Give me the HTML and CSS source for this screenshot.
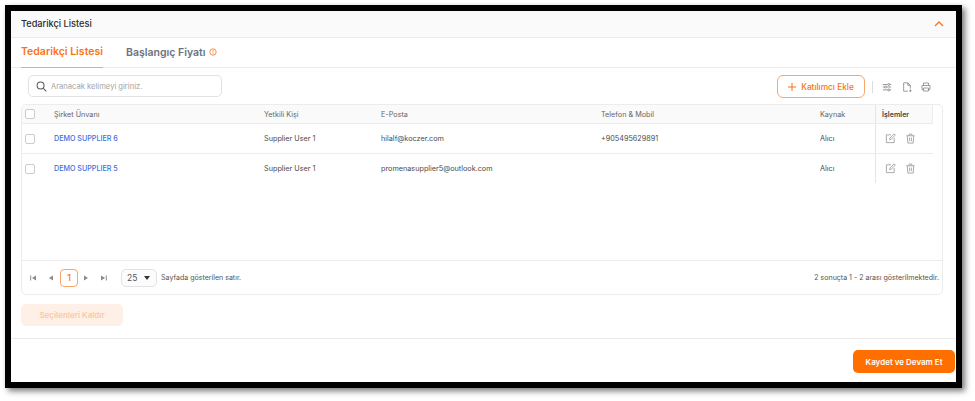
FILE: index.html
```html
<!DOCTYPE html>
<html lang="tr">
<head>
<meta charset="utf-8">
<title>Tedarikçi Listesi</title>
<link rel="stylesheet" href="styles.css">
</head>
<body>
<main class="frame">
  <header class="panel-head">
    <span>Tedarikçi Listesi</span>
    <svg class="chev" viewBox="0 0 10 6" width="10" height="6"><path d="M1 5l4-4 4 4" fill="none" stroke="#f97316" stroke-width="1.300"/></svg>
  </header>
  <nav class="tabs">
    <a class="tab active">Tedarikçi Listesi</a>
    <a class="tab">Başlangıç Fiyatı
      <svg viewBox="0 0 10 10" width="8" height="8"><circle cx="5" cy="5" r="4" fill="none" stroke="#f97316" stroke-width="1"/><path d="M5 2.600v3M5 6.600v1" stroke="#f97316" stroke-width="1"/></svg>
    </a>
  </nav>
  <section class="toolbar">
    <div class="search">
      <svg viewBox="0 0 12 12" width="11" height="11"><circle cx="5" cy="5" r="3.800" fill="none" stroke="#555" stroke-width="1.100"/><path d="M8 8l3.300 3.300" stroke="#555" stroke-width="1.100"/></svg>
      <span>Aranacak kelimeyi giriniz.</span>
    </div>
    <div class="tools">
      <button class="add"><svg viewBox="0 0 8 8" width="8" height="8"><path d="M4 0v8M0 4h8" stroke="#f97316" stroke-width="1"/></svg>Katılımcı Ekle</button>
      <i class="divider"></i>
      <svg viewBox="0 0 12 12" width="10" height="10"><path d="M1 3h6M9.500 3H11M1 6h2M5.500 6H11M1 9.500h6M9.500 9.500H11" stroke="#888" fill="none"/><circle cx="8.200" cy="3" r="1.200" fill="none" stroke="#888"/><circle cx="4.200" cy="6" r="1.200" fill="none" stroke="#888"/><circle cx="8.200" cy="9.500" r="1.200" fill="none" stroke="#888"/></svg>
      <svg viewBox="0 0 12 12" width="10" height="10"><path d="M7 11H2V1h5l3 3v4M7 1v3h3M10 9v3M8.500 10.500h3" stroke="#888" fill="none"/></svg>
      <svg viewBox="0 0 12 12" width="10" height="10"><path d="M3 4V1.200h6V4M3 9H1.200V4.200h9.600V9H9M3 7.200h6v3.600H3z" stroke="#888" fill="none"/></svg>
    </div>
  </section>
  <section class="table-card">
    <div class="row head">
      <div class="c chk"><i class="box"></i></div>
      <div class="c name">Şirket Ünvanı</div>
      <div class="c person">Yetkili Kişi</div>
      <div class="c mail">E-Posta</div>
      <div class="c phone">Telefon &amp; Mobil</div>
      <div class="c src">Kaynak</div>
      <div class="c act">İşlemler</div>
    </div>
    <div class="row body">
      <div class="c chk"><i class="box"></i></div>
      <div class="c name"><a>DEMO SUPPLIER 6</a></div>
      <div class="c person">Supplier User 1</div>
      <div class="c mail">hilalf@koczer.com</div>
      <div class="c phone">+905495629891</div>
      <div class="c src">Alıcı</div>
      <div class="c act">
        <svg viewBox="0 0 12 12" width="11" height="11"><path d="M6.500 2H1.500v8.500H10V5.500M5 7.200l.4-1.800L10 .9l1.300 1.300-4.500 4.600z" fill="none" stroke="#a3a3a3"/></svg>
        <svg viewBox="0 0 12 12" width="11" height="11"><path d="M1.500 3h9M4.500 3V1.200h3V3M2.500 3l.6 8h5.800l.6-8M5 5v4M7 5v4" fill="none" stroke="#a3a3a3"/></svg>
      </div>
    </div>
    <div class="row body last">
      <div class="c chk"><i class="box"></i></div>
      <div class="c name"><a>DEMO SUPPLIER 5</a></div>
      <div class="c person">Supplier User 1</div>
      <div class="c mail">promenasupplier5@outlook.com</div>
      <div class="c phone"></div>
      <div class="c src">Alıcı</div>
      <div class="c act">
        <svg viewBox="0 0 12 12" width="11" height="11"><path d="M6.500 2H1.500v8.500H10V5.500M5 7.200l.4-1.800L10 .9l1.300 1.300-4.500 4.600z" fill="none" stroke="#a3a3a3"/></svg>
        <svg viewBox="0 0 12 12" width="11" height="11"><path d="M1.500 3h9M4.500 3V1.200h3V3M2.500 3l.6 8h5.800l.6-8M5 5v4M7 5v4" fill="none" stroke="#a3a3a3"/></svg>
      </div>
    </div>
    <div class="spacer"></div>
    <footer class="pager">
      <div class="pg-left">
        <svg class="pi" viewBox="0 0 6 6" width="6" height="6"><path d="M6 .5L2 3l4 2.500z" fill="#8a8a8a"/><path d="M.7 .5v5" stroke="#8a8a8a"/></svg>
        <svg class="pi" viewBox="0 0 6 6" width="6" height="6"><path d="M5 .5L1 3l4 2.500z" fill="#8a8a8a"/></svg>
        <span class="cur">1</span>
        <svg class="pi" viewBox="0 0 6 6" width="6" height="6"><path d="M1 .5L5 3 1 5.500z" fill="#8a8a8a"/></svg>
        <svg class="pi" viewBox="0 0 6 6" width="6" height="6"><path d="M0 .5L4 3 0 5.500z" fill="#8a8a8a"/><path d="M5.300 .5v5" stroke="#8a8a8a"/></svg>
        <div class="size"><span>25</span><i class="caret"></i></div>
        <span class="lbl">Sayfada gösterilen satır.</span>
      </div>
      <span class="lbl">2 sonuçta 1 - 2 arası gösterilmektedir.</span>
    </footer>
  </section>
  <div class="bulk"><button class="remove">Seçilenleri Kaldır</button></div>
  <div class="actions"><button class="save">Kaydet ve Devam Et</button></div>
</main>
</body>
</html>
```
FILE: styles.css
```css
* { box-sizing: border-box; }
html, body { margin: 0; background: #fff; }
body { font-family: Inter, "Liberation Sans", sans-serif; color: #333; width: 975px; height: 401px; overflow: hidden; }
.frame { margin: 5px 0 0 5px; width: 957px; height: 383px; border: 6px solid #000; background: #fff; box-shadow: 3px 3px 6px #777; display: flex; flex-direction: column; }
.panel-head { height: 27px; background: #fafafa; border-bottom: 1px solid #ebebeb; display: flex; align-items: center; justify-content: space-between; padding: 0 12px 1px 10px; font-size: 9.200px; font-weight: 500; color: #2b2b2b; }
.tabs { height: 30px; border-bottom: 1px solid #ebebeb; display: flex; gap: 23px; padding-left: 10px; }
.tab { font-size: 10.500px; font-weight: 600; color: #6b7280; display: flex; align-items: center; gap: 4px; padding-bottom: 2px; height: 30px; }
.tab.active { color: #f97316; border-bottom: 1px solid #f9a56b; }
.toolbar { height: 36px; display: flex; align-items: flex-start; justify-content: space-between; padding: 7px 25px 0 17px; }
.search { width: 194px; height: 22px; border: 1px solid #e2e2e2; border-radius: 5px; display: flex; align-items: center; gap: 4px; padding-left: 7px; font-size: 7.600px; color: #a3a3a3; }
.tools { display: flex; align-items: center; gap: 9.500px; }
.add { width: 88px; height: 23px; border: 1px solid #f9a56b; border-radius: 6px; background: #fff; color: #f97316; font: 500 8.300px Inter, sans-serif; display: flex; align-items: center; justify-content: center; gap: 5px; padding: 0; }
.divider { width: 1px; height: 12px; background: #ddd; margin-left: -3px; }
.table-card { margin: 0 13px 0 10px; height: 191px; border: 1px solid #ececec; border-radius: 5px; display: flex; flex-direction: column; font-size: 7.250px; }
.row { display: flex; border-bottom: 1px solid #ececec; margin-right: 9px; }
.row.head { height: 19px; background: #fafafa; color: #666; font-weight: 400; border-top-left-radius: 5px; }
.row.body { height: 30px; color: #4b4b4b; font-weight: 400; }
.row.last { height: 29px; border-bottom: 0; }
.c { display: flex; align-items: center; }
.chk { width: 32px; padding-left: 3px; }
.box { width: 10px; height: 10px; border: 1px solid #ccc; border-radius: 2px; background: #fff; }
.name { width: 210px; }
.name a { color: #3b6fe0; font-weight: 500; font-size: 7.150px; }
.person { width: 117px; }
.mail { width: 220px; }
.phone { width: 219px; }
.src { width: 55px; }
.act { width: 58px; border-left: 1.500px solid #e5e5e5; padding-left: 9px; gap: 9px; }
.head .act { color: #444; font-weight: 600; border-right: 1px solid #ececec; padding-left: 6px; font-size: 7.100px; }
.spacer { flex: 1; }
.pager { height: 34px; border-top: 1px solid #ececec; display: flex; align-items: center; justify-content: space-between; padding: 0 3px 0 3px; }
.pg-left { display: flex; align-items: center; }
.pi { margin: 0 6px; flex: none; }
.pi:first-child { margin-left: 5px; }
.cur { width: 18px; height: 18px; border: 1px solid #f9a56b; border-radius: 4px; color: #f97316; display: flex; align-items: center; justify-content: center; font-size: 9px; font-weight: 500; margin-right: -1px; }
.size { width: 36px; height: 18px; border: 1px solid #e2e2e2; border-radius: 5px; display: flex; align-items: center; justify-content: space-between; padding: 0 6px 0 5px; font-size: 8.500px; color: #555; margin: 0 4px 0 8px; background: #fcfcfc; }
.caret { border: 3px solid transparent; border-top: 4px solid #333; border-bottom: 0; }
.lbl { font-size: 7.050px; color: #555; font-weight: 400; }
.bulk { height: 44px; border-bottom: 1px solid #ebebeb; padding: 9px 0 0 10px; }
.remove { display: block; width: 102px; height: 22px; border: 0; border-radius: 5px; background: #fef0e6; color: #fbc9a6; font: 600 8px Inter, sans-serif; }
.actions { display: flex; justify-content: flex-end; padding: 11px 1px 0 0; }
.save { width: 102px; height: 23px; border: 0; border-radius: 5px; background: #ff6f00; color: #fff; font: 600 8px Inter, sans-serif; }
```
